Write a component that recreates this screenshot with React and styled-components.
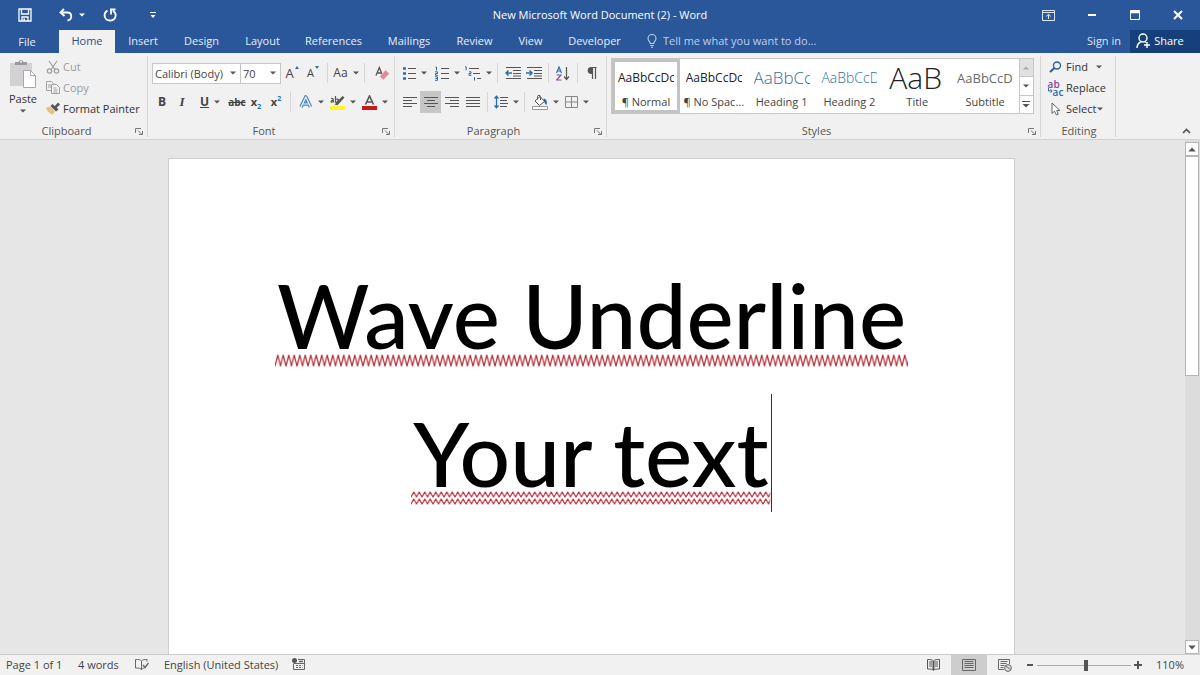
import React, { useState } from 'react'
import styled, { createGlobalStyle } from 'styled-components'

const GlobalStyle = createGlobalStyle`
    * {
        box-sizing: border-box;
    }
    body {
        margin: 0;
        font-family: "Open Sans", "Noto Sans", sans-serif;
        font-size: 11px;
        color: #444;
    }
    button, select, input {
        font: inherit;
        color: inherit;
    }
    svg {
        display: block;
        flex: none;
    }
`

const tabs = [
    { name: 'Home', width: 56 },
    { name: 'Insert', width: 56 },
    { name: 'Design', width: 61 },
    { name: 'Layout', width: 61 },
    { name: 'References', width: 81 },
    { name: 'Mailings', width: 70 },
    { name: 'Review', width: 61 },
    { name: 'View', width: 51 },
    { name: 'Developer', width: 77 },
]

const textStyles = [
    { name: '¶ Normal', sample: 'AaBbCcDc', size: 12, color: '#222' },
    { name: '¶ No Spac...', sample: 'AaBbCcDc', size: 12, color: '#222' },
    { name: 'Heading 1', sample: 'AaBbCc', size: 17, color: '#2e6f9f', light: true },
    { name: 'Heading 2', sample: 'AaBbCcD', size: 14, color: '#2e6f9f', light: true },
    { name: 'Title', sample: 'AaB', size: 30, color: '#222', light: true },
    { name: 'Subtitle', sample: 'AaBbCcD', size: 13, color: '#6a6a6a' },
]

/* ---------- icons ---------- */

const Svg = ({ w = 16, h = 16, children, ...rest }) => (
    <svg width={w} height={h} viewBox={`0 0 ${w} ${h}`} fill="none" stroke="#555" aria-hidden="true" {...rest}>
        {children}
    </svg>
)

const Arrow = ({ color = '#555', width = 6 }) => (
    <svg width={width} height={width === 6 ? 4 : 5} viewBox="0 0 6 4" aria-hidden="true">
        <path d="M0 0.4h6L3 3.600z" fill={color} />
    </svg>
)

const SaveIcon = () => (
    <Svg w={14} h={14} stroke="#fff" strokeWidth="1.3">
        <path d="M1 1h12v12H1z" />
        <path d="M3.500 1.500v4.500h7V1.500M4 13V9h6v4" />
        <path d="M6.200 10.500v2" strokeWidth="1.600" />
    </Svg>
)

const UndoIcon = () => (
    <Svg w={14} h={14} stroke="#fff" strokeWidth="1.8">
        <path d="M5 1L1.500 4.500L5.500 8M2 4.500h6.500c5 0 5 7.500 0 8" />
    </Svg>
)

const RedoIcon = () => (
    <Svg w={14} h={14} stroke="#fff" strokeWidth="1.8">
        <path d="M4.500 2.500C-0.500 5.500 1.500 12.500 7 12.500c6 0 7.500-7 3-9.500M7 1.500h5.500M8 1.500v5" />
    </Svg>
)

const CustomizeIcon = () => (
    <Svg w={6} h={8} stroke="#fff">
        <path d="M0 1.500h6" />
        <path d="M0.500 4h5L3 7z" fill="#fff" stroke="none" />
    </Svg>
)

const DisplayIcon = () => (
    <Svg w={13} h={11} stroke="#dfe8f5">
        <path d="M0.500 0.500h12v10H0.500zM0.500 2.500h12M6.500 9V4.500M4 6.500L6.500 4.300L9 6.500" />
    </Svg>
)

const MinimizeIcon = () => (
    <Svg w={10} h={10} stroke="#fff" strokeWidth="2">
        <path d="M1 5h8" />
    </Svg>
)

const MaximizeIcon = () => (
    <Svg w={10} h={10} stroke="#fff">
        <path d="M0.500 0.500h9v9h-9z" />
        <path d="M0 2h10" strokeWidth="2.500" />
    </Svg>
)

const CloseIcon = () => (
    <Svg w={10} h={10} stroke="#fff" strokeWidth="2">
        <path d="M1 1l8 8M9 1L1 9" />
    </Svg>
)

const BulbIcon = () => (
    <Svg w={10} h={14} stroke="#bcd0ec" strokeWidth="1.100">
        <path d="M3.300 9.500C3.300 7.500 1 7 1 4.500a4 4 0 0 1 8 0c0 2.500-2.300 3-2.300 5zM3.300 11.500h3.400M4 13.300h2" />
    </Svg>
)

const ShareIcon = () => (
    <Svg w={15} h={16} stroke="#fff" strokeWidth="1.400">
        <circle cx="7" cy="5" r="4" />
        <path d="M1 15c0-3.500 2-5.500 4.500-6.500M8.500 8.500l1.500 1M11 9v6M8 12h6" />
    </Svg>
)

const PasteIcon = () => (
    <Svg w={28} h={30}>
        <path d="M1 4h22v23H1z" fill="#d3d1d4" stroke="none" />
        <path d="M6 6V3h3.500a2.600 2.600 0 0 1 5 0H18v3z" fill="#9a9a9a" stroke="none" />
        <circle cx="12" cy="2.800" r="1" fill="#f1f1f1" stroke="none" />
        <path d="M14.500 11.500h7l5 5v12h-12z" fill="#fff" stroke="#aaa" />
        <path d="M21.500 11.500v5h5" stroke="#aaa" />
    </Svg>
)

const CutIcon = () => (
    <Svg w={14} h={14} stroke="#9b9b9b" strokeWidth="1.200">
        <path d="M3 1l6 8.500M11 1L5 9.500" />
        <circle cx="3.500" cy="11" r="2.200" />
        <circle cx="10.500" cy="11" r="2.200" />
    </Svg>
)

const CopyIcon = () => (
    <Svg w={14} h={13} stroke="#a2a2a2">
        <path d="M0.500 0.500h5l2 2v7h-7zM2 4h3M2 6h3" />
        <path d="M5.500 3.500h5l3 3v6h-8z" fill="#f3f3f3" />
        <path d="M7.500 7h3M7.500 9h4M7.500 11h4" />
    </Svg>
)

const BrushIcon = () => (
    <Svg w={14} h={13} stroke="none">
        <path d="M0 5.500l4-1l5 5L7 12.500C4 12.500 1.500 9.500 0 5.500z" fill="#e5c27e" />
        <path d="M4.500 4l2-2l6 5.500l-2.500 2z" fill="#555" />
        <path d="M8.500 4.500L12 0.500l2 2l-3.500 3.500z" fill="#555" />
    </Svg>
)

const LauncherIcon = () => (
    <Svg w={8} h={7} stroke="#777">
        <path d="M0.500 5V0.500H6M3 2.500l4 4M7.500 3v3.500H4" />
    </Svg>
)

const EraserIcon = () => (
    <Svg w={15} h={15}>
        <path d="M1 9.500L4.300 1.500L7.500 9.500M2.300 7h4.500" strokeWidth="1.300" />
        <path d="M4.500 10.500l6-6.500l4 3.500l-6 6.500z" fill="#e4899b" stroke="#f1f1f1" strokeWidth="0.500" />
    </Svg>
)

const BulletsIcon = () => (
    <Svg w={13} h={14}>
        <path d="M5 2.500h8M5 7.500h8M5 12.500h8" />
        <path d="M0 2.500h3M0 7.500h3M0 12.500h3" stroke="#2b6cab" strokeWidth="2.400" />
    </Svg>
)

const NumberingIcon = () => (
    <Svg w={14} h={15}>
        <path d="M6 2.500h8M6 7.500h8M6 12.500h8" />
        <path d="M0.500 1h1v3.500M0 5.800h2.500v1.700h-2v1.800h2.500M0 10.800h2.500v3.500H0M0.500 12.500h2" stroke="#2b6cab" />
    </Svg>
)

const MultilevelIcon = () => (
    <Svg w={16} h={15}>
        <path d="M4 2.500h10M8 7.500h7M12 12.500h4" />
        <path d="M0 0.800h1.200v3.500M4 5.800h2v1.700H4v1.800h2.500M9.500 11v3.500" stroke="#2b6cab" />
    </Svg>
)

const IndentIcon = ({ more }) => (
    <Svg w={16} h={12}>
        <path d="M1 0.500h15M8 3.500h8M8 6.500h8M1 11.500h15M8 9h8" />
        <path d={more ? 'M0 6h6M3.500 3.500L6 6L3.500 8.500' : 'M7 6H1M3.500 3.500L1 6l2.500 2.500'} stroke="#2b6cab" strokeWidth="1.500" />
    </Svg>
)

const SortIcon = () => (
    <Svg w={14} h={15}>
        <path d="M0.500 7L3 1l2.500 6M1.300 5h3.400" stroke="#2b6cab" strokeWidth="1.200" />
        <path d="M0.500 9h4.500l-4.500 5H5.500" stroke="#8a4fa3" strokeWidth="1.200" />
        <path d="M10.500 1v12M8 10.500l2.500 3l2.500-3" strokeWidth="1.200" />
    </Svg>
)

const PilcrowIcon = () => (
    <Svg w={10} h={12}>
        <path d="M9.500 0.500H4a3 3 0 0 0 0 6h1.500V0.500" fill="#555" />
        <path d="M5.500 0.500V12M8.500 0.500V12" strokeWidth="1.200" />
    </Svg>
)

const alignPaths = {
    left: 'M0 0.500h14M0 3.500h9M0 6.500h14M0 9.500h9',
    center: 'M0 0.500h14M3 3.500h8M0 6.500h14M3 9.500h8',
    right: 'M0 0.500h14M5 3.500h9M0 6.500h14M5 9.500h9',
    justify: 'M0 0.500h14M0 3.500h14M0 6.500h14M0 9.500h14',
}

const AlignIcon = ({ kind }) => (
    <Svg w={14} h={10}>
        <path d={alignPaths[kind]} />
    </Svg>
)

const SpacingIcon = () => (
    <Svg w={14} h={14}>
        <path d="M6 2.500h8M6 5.500h7M6 8.500h8M6 11.500h7" />
        <path d="M2.500 1v12M0.500 3.500l2-2.300l2 2.300M0.500 10.500l2 2.300l2-2.300" stroke="#2b6cab" strokeWidth="1.300" />
    </Svg>
)

const BucketIcon = () => (
    <Svg w={16} h={15}>
        <path d="M3 6l5-4.500l4.500 5L7.500 10.500zM5.500 4.500V1.500c0-1.500 3-1.500 3 0V5" fill="#fff" />
        <path d="M11.500 3.500c3 0.500 4 3 3 6.500c-1.800-1-2.500-3.500-3-6.500z" fill="#33688f" stroke="none" />
        <path d="M0.500 11.500h15v3H0.500z" fill="#fff" stroke="#999" />
    </Svg>
)

const BordersIcon = () => (
    <Svg w={13} h={12} stroke="#888">
        <path d="M0.500 0.500h12v11H0.500zM6.500 0.500v11M0.500 6h12" />
    </Svg>
)

const HighlightIcon = () => (
    <Svg w={15} h={15}>
        <path d="M4.500 9.500l3 0.800l7-7.800l-2-1.500L6.500 7.500z" fill="#555" stroke="none" />
        <path d="M1 3.500c2-0.800 2.500 0 2.500 4M3.500 5.200C0 5.500 0.500 8 3.500 6.800M5.500 1v6.500M5.500 4.500c3-2 4 3 0 3M8 4l1.500 3" strokeWidth="1.200" />
        <path d="M0 11h15v4H0z" fill="#fbf52e" stroke="none" />
    </Svg>
)

const FontColorIcon = () => (
    <Svg w={15} h={15}>
        <path d="M3.500 9.500L7.500 1l4 8.500M5 7h5" strokeWidth="1.600" />
        <path d="M0 11h15v4H0z" fill="#c8171d" stroke="none" />
    </Svg>
)

const EffectsIcon = () => (
    <Svg w={14} h={14} strokeLinejoin="round">
        <path d="M2 12L6.800 2L11.500 12M4 9h6" stroke="#4d88bd" strokeWidth="3.600" />
        <path d="M2 12L6.800 2L11.500 12M4 9h6" stroke="#f1f6fb" strokeWidth="1.200" />
    </Svg>
)

const FindIcon = () => (
    <Svg w={13} h={12} stroke="#2f6295">
        <circle cx="8" cy="4.500" r="3.500" strokeWidth="1.400" />
        <path d="M5.500 7L1 11" strokeWidth="2.200" />
    </Svg>
)

const SelectIcon = () => (
    <Svg w={10} h={14} stroke="#666">
        <path d="M1 1v10.500l2.500-2.300L5.500 13l1.800-0.800L5.700 8.500H9z" fill="#fff" />
    </Svg>
)

const ReplaceArrow = () => (
    <Svg w={5} h={5} stroke="#2b6cab">
        <path d="M0.500 0v3H4M2.500 1.200L4.200 3L2.500 4.800" />
    </Svg>
)

const MoreIcon = () => (
    <Svg w={8} h={8}>
        <path d="M0 1.500h8" />
        <path d="M0.500 4h7L4 7.500z" fill="#555" stroke="none" />
    </Svg>
)

const ChevronUp = () => (
    <Svg w={9} h={6} strokeWidth="1.700">
        <path d="M1 5l3.500-3.500L8 5" />
    </Svg>
)

const ProofIcon = () => (
    <Svg w={14} h={13} stroke="#666">
        <path d="M6.500 11.500C5 10 3 10 0.500 10V1.500c3 0 5 0 6 1.500v9M6.500 3C8 1.500 9.500 1.500 12 1.500v2M6.500 11.500c1-1 2-1.500 3-1.500" />
        <path d="M8 7l2 2.500L13.500 5" strokeWidth="1.400" />
    </Svg>
)

const MacroIcon = () => (
    <Svg w={13} h={12} stroke="#666">
        <path d="M6 1.500h6.500v10h-11V6M1.500 5.500h11" />
        <path d="M4 7.500h6.500M4 9.500h6.500" strokeDasharray="2 1" />
        <circle cx="2.500" cy="2.500" r="2.500" fill="#555" stroke="none" />
        <path d="M7 3.500h4" strokeWidth="1.500" />
    </Svg>
)

const ReadIcon = () => (
    <Svg w={13} h={12} stroke="#555">
        <path d="M6.500 2C5 0.500 3 0.500 0.500 0.500v9.500c3 0 5 0 6 1.500c1-1.500 3-1.500 6-1.500V0.500C10 0.500 8 0.500 6.500 2z" />
        <path d="M6.500 2v9" strokeWidth="2" />
        <path d="M2 3h3M2 5h3M2 7h3M8 3h3M8 5h3M8 7h3" />
    </Svg>
)

const PrintIcon = () => (
    <Svg w={14} h={12} stroke="#666">
        <path d="M0.500 0.500h13v11h-13zM2.500 2.500h9M2.500 4.500h9M2.500 6.500h9M2.500 8.500h9" />
    </Svg>
)

const WebIcon = () => (
    <Svg w={14} h={13} stroke="#666">
        <path d="M6 10.500H0.500v-10h11V5M2.500 2.500h7M2.500 4.500h6M2.500 6.500h4M2.500 8.500h3" />
        <circle cx="10" cy="9" r="3.400" fill="#ddd" />
        <path d="M8 7c1 1.500 2.500 1 4 3.500" />
    </Svg>
)

// a zigzag tile repeated over the width of the line, once or stacked twice
const Wave = ({ id, period, height, rows = 1 }) => (
    <WaveSvg $height={height * rows} aria-hidden="true">
        <defs>
            <pattern id={id} width={period} height={height} patternUnits="userSpaceOnUse">
                <path
                    d={`M${-period / 2} 1L0 ${height - 1}L${period / 2} 1L${period} ${height - 1}L${period * 1.5} 1`}
                    fill="none"
                    stroke="#b8303a"
                    strokeWidth="1.200"
                    strokeLinejoin="round"
                />
            </pattern>
        </defs>
        <rect width="100%" height="100%" fill={`url(#${id})`} />
    </WaveSvg>
)

/* ---------- parts ---------- */

function Group({ title, width, launcher = true, children }) {
    return (
        <GroupBox $width={width} aria-label={title}>
            <GroupBody>{children}</GroupBody>
            <GroupFooter>
                <GroupTitle>{title}</GroupTitle>
                {launcher && <Launcher aria-label={`${title} settings`}><LauncherIcon /></Launcher>}
            </GroupFooter>
        </GroupBox>
    )
}

function Tool({ label, width = 20, menu, active, children }) {
    return (
        <ToolButton aria-label={label} $width={width} $active={active}>
            {children}
            {menu && <Arrow />}
        </ToolButton>
    )
}

function App() {
    const [tab, setTab] = useState('Home')
    const [style, setStyle] = useState('¶ Normal')
    const [zoom, setZoom] = useState(110)

    return (
        <Window>
            <GlobalStyle />
            <TitleBar>
                <QuickAccess>
                    <BarButton $width={40} aria-label="Save"><SaveIcon /></BarButton>
                    <BarButton $width={54} aria-label="Undo"><UndoIcon /><Arrow color="#fff" /></BarButton>
                    <BarButton $width={22} aria-label="Redo"><RedoIcon /></BarButton>
                    <BarButton $width={64} aria-label="Customize"><CustomizeIcon /></BarButton>
                </QuickAccess>
                <DocTitle>New Microsoft Word Document (2) - Word</DocTitle>
                <WindowControls>
                    <BarButton $width={43} aria-label="Ribbon display options"><DisplayIcon /></BarButton>
                    <BarButton $width={43} aria-label="Minimize"><MinimizeIcon /></BarButton>
                    <BarButton $width={43} aria-label="Maximize"><MaximizeIcon /></BarButton>
                    <BarButton $width={43} aria-label="Close"><CloseIcon /></BarButton>
                </WindowControls>
            </TitleBar>
            <TabBar>
                <FileTab>File</FileTab>
                {tabs.map(t => (
                    <Tab key={t.name} $width={t.width} $active={tab === t.name} onClick={() => setTab(t.name)}>{t.name}</Tab>
                ))}
                <TellMe>
                    <BulbIcon />
                    <TellInput aria-label="Tell me" placeholder="Tell me what you want to do..." />
                </TellMe>
                <SignIn href="#signin">Sign in</SignIn>
                <Share><ShareIcon />Share</Share>
            </TabBar>
            <Ribbon>
                <Group title="Clipboard" width={148}>
                    <Paste><PasteIcon />Paste<Arrow /></Paste>
                    <Commands>
                        <Command $faded><CommandIcon><CutIcon /></CommandIcon>Cut</Command>
                        <Command $faded><CommandIcon><CopyIcon /></CommandIcon>Copy</Command>
                        <Command><CommandIcon><BrushIcon /></CommandIcon>Format Painter</Command>
                    </Commands>
                </Group>
                <Group title="Font" width={247}>
                    <Rows>
                        <Row>
                            <Picker $width={89}>
                                <PickerSelect aria-label="Font"><option>Calibri (Body)</option></PickerSelect>
                                <Arrow />
                            </Picker>
                            <Picker $width={40}>
                                <PickerSelect aria-label="Font size"><option>70</option></PickerSelect>
                                <Arrow />
                            </Picker>
                            <Tool label="Grow font" width={22}><Letter $size={13}>A</Letter><Tick $up /></Tool>
                            <Tool label="Shrink font" width={20}><Letter $size={11}>A</Letter><Tick /></Tool>
                            <Divider />
                            <Tool label="Change case" width={28} menu><Letter $size={12}>Aa</Letter></Tool>
                            <Divider />
                            <Tool label="Clear formatting" width={26}><EraserIcon /></Tool>
                        </Row>
                        <Row>
                            <Tool label="Bold"><Letter $size={12} $bold>B</Letter></Tool>
                            <Tool label="Italic"><Letter $size={13} $bold $italic>I</Letter></Tool>
                            <Tool label="Underline" width={36} menu><Letter $size={12} $bold $underline>U</Letter></Tool>
                            <Tool label="Strikethrough" width={18}><Letter $size={10} $bold $strike>abc</Letter></Tool>
                            <Tool label="Subscript"><Letter $size={11} $bold>x<sub>2</sub></Letter></Tool>
                            <Tool label="Superscript"><Letter $size={11} $bold>x<sup>2</sup></Letter></Tool>
                            <Divider />
                            <Tool label="Text effects" width={32} menu><EffectsIcon /></Tool>
                            <Tool label="Highlight" width={32} menu><HighlightIcon /></Tool>
                            <Tool label="Font color" width={32} menu><FontColorIcon /></Tool>
                        </Row>
                    </Rows>
                </Group>
                <Group title="Paragraph" width={212}>
                    <Rows>
                        <Row>
                            <Tool label="Bullets" width={32} menu><BulletsIcon /></Tool>
                            <Tool label="Numbering" width={32} menu><NumberingIcon /></Tool>
                            <Tool label="Multilevel list" width={30} menu><MultilevelIcon /></Tool>
                            <Divider />
                            <Tool label="Decrease indent" width={21}><IndentIcon /></Tool>
                            <Tool label="Increase indent" width={21}><IndentIcon more /></Tool>
                            <Divider />
                            <Tool label="Sort"><SortIcon /></Tool>
                            <Divider />
                            <Tool label="Show marks"><PilcrowIcon /></Tool>
                        </Row>
                        <Row>
                            <Tool label="Align left" width={21}><AlignIcon kind="left" /></Tool>
                            <Tool label="Center" width={21} active><AlignIcon kind="center" /></Tool>
                            <Tool label="Align right" width={21}><AlignIcon kind="right" /></Tool>
                            <Tool label="Justify" width={21}><AlignIcon kind="justify" /></Tool>
                            <Divider />
                            <Tool label="Line spacing" width={28} menu><SpacingIcon /></Tool>
                            <Divider />
                            <Tool label="Shading" width={32} menu><BucketIcon /></Tool>
                            <Tool label="Borders" width={32} menu><BordersIcon /></Tool>
                        </Row>
                    </Rows>
                </Group>
                <Group title="Styles" width={434}>
                    <Gallery>
                        {textStyles.map(s => (
                            <StyleCard key={s.name} $active={style === s.name} onClick={() => setStyle(s.name)}>
                                <Sample $size={s.size} $color={s.color} $light={s.light}>{s.sample}</Sample>
                                <span>{s.name}</span>
                            </StyleCard>
                        ))}
                        <GalleryScroll>
                            <GalleryButton aria-label="Previous styles" $off><Flip><Arrow color="#aaa" /></Flip></GalleryButton>
                            <GalleryButton aria-label="Next styles"><Arrow /></GalleryButton>
                            <GalleryButton aria-label="More styles"><MoreIcon /></GalleryButton>
                        </GalleryScroll>
                    </Gallery>
                </Group>
                <Group title="Editing" width={75} launcher={false}>
                    <Commands>
                        <Command><CommandIcon><FindIcon /></CommandIcon>Find<MenuGap $width={8}><Arrow /></MenuGap></Command>
                        <Command>
                            <CommandIcon>
                                <ReplaceMark><b>ab</b><span><ReplaceArrow /><i>ac</i></span></ReplaceMark>
                            </CommandIcon>
                            Replace
                        </Command>
                        <Command><CommandIcon><SelectIcon /></CommandIcon>Select<MenuGap $width={1}><Arrow /></MenuGap></Command>
                    </Commands>
                </Group>
                <Collapse aria-label="Collapse the ribbon"><ChevronUp /></Collapse>
            </Ribbon>
            <Workspace>
                <Desk>
                    <Page>
                        <Line>Wave Underline<Wave id="wave" period={5.5} height={13} /></Line>
                        <Line $caret>Your text<Wave id="double" period={5.5} height={7} rows={2} /></Line>
                    </Page>
                </Desk>
                <ScrollBar>
                    <ScrollButton aria-label="Scroll up"><Flip><Arrow width={8} /></Flip></ScrollButton>
                    <Thumb />
                    <ScrollButton aria-label="Scroll down"><Arrow width={8} /></ScrollButton>
                </ScrollBar>
            </Workspace>
            <StatusBar>
                <StatusItem $width={72}>Page 1 of 1</StatusItem>
                <StatusItem $width={57}>4 words</StatusItem>
                <StatusItem $width={29}><ProofIcon /></StatusItem>
                <StatusItem $width={128}>English (United States)</StatusItem>
                <StatusItem $width={20}><MacroIcon /></StatusItem>
                <Spacer />
                <ViewButton aria-label="Read mode"><ReadIcon /></ViewButton>
                <ViewButton aria-label="Print layout" $active><PrintIcon /></ViewButton>
                <ViewButton aria-label="Web layout"><WebIcon /></ViewButton>
                <ZoomButton aria-label="Zoom out" onClick={() => setZoom(Math.max(10, zoom - 10))}>
                    <Svg w={8} h={8} strokeWidth="2"><path d="M1 4h6" /></Svg>
                </ZoomButton>
                <ZoomRange aria-label="Zoom" type="range" min={10} max={202} value={zoom} onChange={e => setZoom(Number(e.target.value))} />
                <ZoomButton aria-label="Zoom in" onClick={() => setZoom(Math.min(200, zoom + 10))}>
                    <Svg w={8} h={8} strokeWidth="2"><path d="M0 4h8M4 0v8" /></Svg>
                </ZoomButton>
                <ZoomValue>{zoom}%</ZoomValue>
            </StatusBar>
        </Window>
    )
}

/* ---------- frame ---------- */

const Window = styled.div`
    height: 100vh;
    display: flex;
    flex-direction: column;
    overflow: hidden;
    background-color: #e6e6e6;
`

const TitleBar = styled.header`
    flex: none;
    height: 30px;
    display: grid;
    grid-template-columns: 1fr auto 1fr;
    align-items: center;
    background-color: #2a579a;
    color: #fff;
`

const QuickAccess = styled.div`
    display: flex;
    padding-left: 5px;
`

const DocTitle = styled.div`
    line-height: 30px;
`

const WindowControls = styled.div`
    display: flex;
    justify-content: flex-end;
    padding-right: 1px;
`

const PlainButton = styled.button`
    display: flex;
    align-items: center;
    justify-content: center;
    padding: 0;
    border: 0;
    background: none;
    white-space: nowrap;
    cursor: pointer;
`

const BarButton = styled(PlainButton)`
    width: ${props => props.$width}px;
    height: 26px;
    gap: 6px;
    &:hover {
        background-color: #3e6db5;
    }
`

const TabBar = styled.nav`
    flex: none;
    height: 23px;
    display: flex;
    background-color: #2a579a;
    color: #fff;
`

const Tab = styled(PlainButton)`
    width: ${props => props.$width}px;
    padding-bottom: 2px;
    background-color: ${props => props.$active ? '#f1f1f1' : 'transparent'};
    color: ${props => props.$active ? '#2a4f8a' : '#e8eef8'};
`

const FileTab = styled(PlainButton)`
    width: 54px;
    margin-right: 5px;
    color: #e8eef8;
`

const TellMe = styled.label`
    flex: 1;
    display: flex;
    align-items: center;
    gap: 6px;
    padding: 0 0 2px 14px;
`

const TellInput = styled.input`
    flex: 1;
    min-width: 0;
    padding: 0;
    border: 0;
    background: none;
    outline: none;
    &::placeholder {
        color: #bcd0ec;
        opacity: 1;
    }
`

const SignIn = styled.a`
    padding: 0 9px;
    line-height: 22px;
    color: #dfe8f5;
    text-decoration: none;
`

const Share = styled(PlainButton)`
    width: 70px;
    gap: 3px;
    padding: 0 10px 2px 0;
    background-color: #16407b;
    color: #fff;
`

/* ---------- ribbon ---------- */

const Ribbon = styled.section`
    flex: none;
    height: 87px;
    display: flex;
    background-color: #f1f1f1;
    border-bottom: 1px solid #d2d2d2;
`

const GroupBox = styled.section`
    flex: none;
    width: ${props => props.$width}px;
    margin: 3px 0 2px;
    display: flex;
    flex-direction: column;
    border-right: 1px solid #d6d6d6;
`

const GroupBody = styled.div`
    flex: 1;
    display: flex;
    padding-left: 4px;
`

const GroupFooter = styled.footer`
    height: 12px;
    display: flex;
    align-items: center;
    line-height: 12px;
`

const GroupTitle = styled.div`
    flex: 1;
    padding-left: 2px;
    text-align: center;
    color: #555;
`

const Launcher = styled(PlainButton)`
    width: 16px;
`

const Paste = styled(PlainButton)`
    width: 38px;
    flex-direction: column;
    justify-content: flex-start;
    gap: 2px;
    padding-top: 3px;
    line-height: 16px;
    color: #333;
`

const Commands = styled.div`
    display: flex;
    flex-direction: column;
`

const Command = styled(PlainButton)`
    height: 21px;
    justify-content: flex-start;
    color: ${props => props.$faded ? '#9b9b9b' : '#333'};
`

const CommandIcon = styled.span`
    width: 21px;
    display: flex;
    justify-content: center;
`

const MenuGap = styled.span`
    padding-left: ${props => props.$width}px;
`

const ReplaceMark = styled.span`
    display: flex;
    flex-direction: column;
    font-size: 10px;
    line-height: 8px;
    b {
        color: #7b4a9a;
        font-weight: 600;
        text-align: left;
    }
    span {
        display: flex;
    }
    i {
        font-style: normal;
        font-weight: 600;
        color: #2b6cab;
    }
`

const Rows = styled.div`
    display: flex;
    flex-direction: column;
    gap: 7px;
    padding-top: 6px;
`

const Row = styled.div`
    display: flex;
    align-items: center;
    height: 22px;
`

const Picker = styled.div`
    width: ${props => props.$width}px;
    height: 21px;
    display: flex;
    align-items: center;
    padding-right: 4px;
    background-color: #fff;
    border: 1px solid #c6c6c6;
    & + & {
        border-left: 0;
    }
`

const PickerSelect = styled.select`
    flex: 1;
    min-width: 0;
    appearance: none;
    padding: 0 0 0 2px;
    border: 0;
    background: none;
    outline: none;
`

const ToolButton = styled(PlainButton)`
    flex: none;
    width: ${props => props.$width}px;
    height: 22px;
    gap: 5px;
    background-color: ${props => props.$active ? '#c6c6c6' : 'transparent'};
`

const Letter = styled.span`
    font-size: ${props => props.$size}px;
    line-height: 16px;
    font-weight: ${props => props.$bold ? 700 : 500};
    font-style: ${props => props.$italic ? 'italic' : 'normal'};
    font-family: ${props => props.$italic ? '"Liberation Serif", serif' : 'inherit'};
    text-decoration: ${props => props.$underline ? 'underline' : props.$strike ? 'line-through' : 'none'};
    sub, sup {
        font-size: 7px;
        line-height: 0;
        color: #2b6cab;
    }
`

const Tick = styled.i`
    align-self: flex-start;
    margin: 4px 0 0 -4px;
    border: 2px solid transparent;
    border-top: ${props => props.$up ? '0' : '3px solid #2b6cab'};
    border-bottom: ${props => props.$up ? '3px solid #2b6cab' : '0'};
`

const Divider = styled.div`
    flex: none;
    width: 1px;
    height: 20px;
    margin: 0 4px;
    background-color: #d6d6d6;
`

const Gallery = styled.div`
    flex: 1;
    height: 56px;
    margin: 2px 6px 0 0;
    display: flex;
    background-color: #fff;
    border: 1px solid #c6c6c6;
`

const StyleCard = styled(PlainButton)`
    flex: 1;
    min-width: 0;
    flex-direction: column;
    justify-content: flex-end;
    overflow: hidden;
    border: 3px solid ${props => props.$active ? '#c3c3c3' : 'transparent'};
    line-height: 16px;
`

const Sample = styled.span`
    width: 56px;
    height: 30px;
    overflow: hidden;
    line-height: 28px;
    text-align: left;
    font-size: ${props => props.$size}px;
    font-weight: ${props => props.$light ? 300 : 400};
    color: ${props => props.$color};
`

const GalleryScroll = styled.div`
    width: 14px;
    display: flex;
    flex-direction: column;
    border-left: 1px solid #c6c6c6;
`

const GalleryButton = styled(PlainButton)`
    flex: 1;
    background-color: ${props => props.$off ? '#e1e1e1' : '#fff'};
    & + & {
        border-top: 1px solid #c6c6c6;
    }
`

const Flip = styled.span`
    transform: rotate(180deg);
`

const Collapse = styled(PlainButton)`
    align-self: flex-end;
    margin-left: auto;
    width: 28px;
    height: 16px;
`

/* ---------- document ---------- */

const Workspace = styled.main`
    flex: 1;
    min-height: 0;
    display: flex;
`

const Desk = styled.div`
    flex: 1;
    display: flex;
    justify-content: center;
    align-items: stretch;
    padding: 18px 18px 0 16px;
    overflow: hidden;
`

const Page = styled.article`
    width: 100%;
    max-width: 847px;
    display: flex;
    flex-direction: column;
    align-items: center;
    gap: 20px;
    padding-top: 97px;
    background-color: #fff;
    border: 1px solid #cdcdcd;
    border-bottom: 0;
`

const Line = styled.p`
    position: relative;
    margin: 0;
    padding: 0 2px;
    font-family: Lato, "Open Sans", sans-serif;
    font-size: 89px;
    font-weight: 500;
    line-height: 118px;
    white-space: nowrap;
    color: #000;
    border-right: ${props => props.$caret ? '1px solid #333' : '0'};
`

const WaveSvg = styled.svg`
    position: absolute;
    left: 0;
    bottom: 7px;
    width: 100%;
    height: ${props => props.$height}px;
`

const ScrollBar = styled.aside`
    width: 15px;
    display: flex;
    flex-direction: column;
    padding: 2px 1px 0 0;
    background-color: #dcdcdc;
`

const ScrollButton = styled(PlainButton)`
    height: 14px;
    background-color: #fff;
    border: 1px solid #b5b5b5;
`

const Thumb = styled.div`
    height: 43%;
    margin-bottom: auto;
    background-color: #fff;
    border: 1px solid #b5b5b5;
`

/* ---------- status bar ---------- */

const StatusBar = styled.footer`
    flex: none;
    height: 21px;
    display: flex;
    align-items: center;
    padding-left: 6px;
    background-color: #f1f1f1;
    border-top: 1px solid #cdcdcd;
`

const StatusItem = styled.div`
    width: ${props => props.$width}px;
    padding-bottom: 2px;
    white-space: nowrap;
`

const Spacer = styled.div`
    flex: 1;
`

const ViewButton = styled(PlainButton)`
    width: 36px;
    height: 20px;
    background-color: ${props => props.$active ? '#cdcdcd' : 'transparent'};
`

const ZoomButton = styled(PlainButton)`
    width: 14px;
    height: 20px;
`

const ZoomRange = styled.input`
    width: 94px;
    height: 20px;
    margin: 0;
    appearance: none;
    background: linear-gradient(#aaa, #aaa) center / 100% 1px no-repeat;
    &::-webkit-slider-thumb {
        appearance: none;
        width: 4px;
        height: 11px;
        background-color: #555;
    }
`

const ZoomValue = styled.output`
    width: 55px;
    padding: 0 0 2px 11px;
`

export default App
